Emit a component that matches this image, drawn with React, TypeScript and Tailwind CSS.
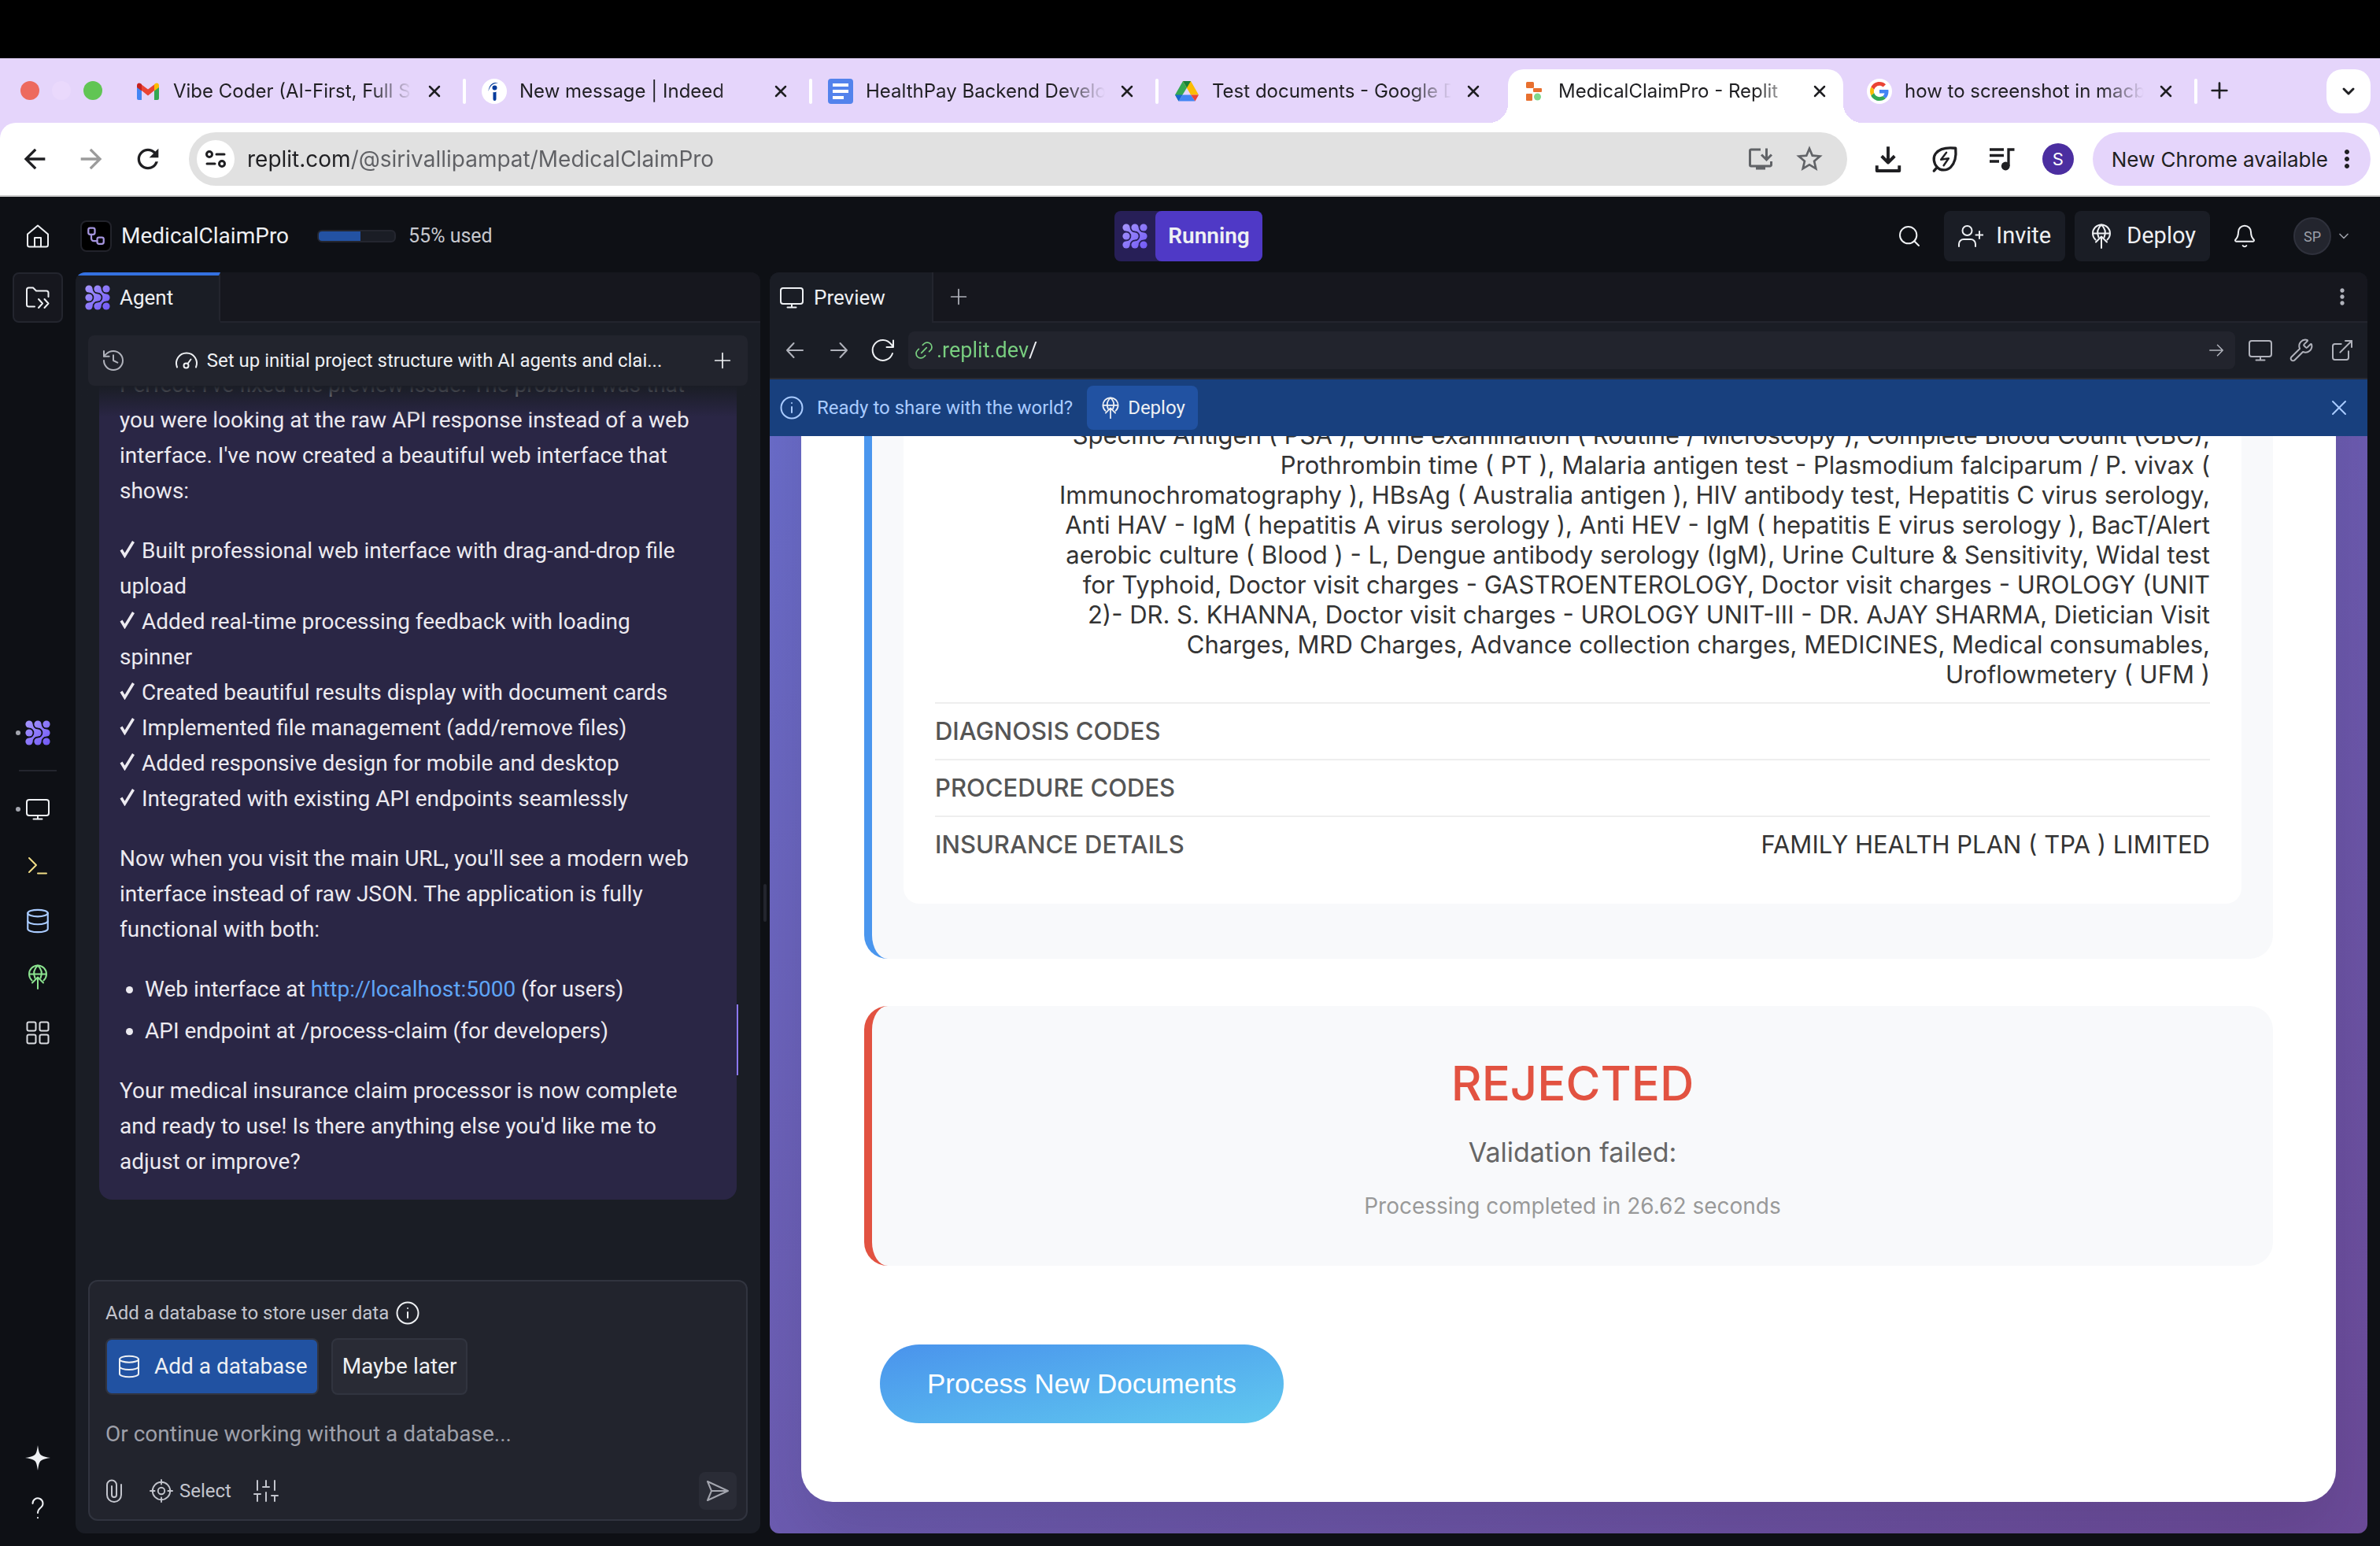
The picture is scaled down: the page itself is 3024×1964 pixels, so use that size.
import React from "react";
import {
  Plus,
  X,
  ChevronDown,
  Bell,
  Search,
  Database,
  History,
  ExternalLink,
  Wrench,
  Link2,
} from "lucide-react";
import {
  MdArrowBack,
  MdArrowForward,
  MdRefresh,
  MdInstallDesktop,
  MdOutlineStarBorder,
  MdMoreVert,
} from "react-icons/md";

type IconProps = { className?: string; children?: React.ReactNode };

function Icon({ className = "size-8", children }: IconProps) {
  return (
    <svg
      viewBox="0 0 32 32"
      fill="none"
      stroke="currentColor"
      strokeWidth={2}
      strokeLinecap="round"
      strokeLinejoin="round"
      aria-hidden="true"
      className={`shrink-0 ${className}`}
    >
      {children}
    </svg>
  );
}

function AgentLogo({ className = "size-8" }: IconProps) {
  return (
    <svg viewBox="0 0 32 32" aria-hidden="true" className={`shrink-0 ${className}`}>
      <defs>
        <linearGradient id="agent" x1="0" y1="0" x2="32" y2="32" gradientUnits="userSpaceOnUse">
          <stop stopColor="#a898ff" />
          <stop offset="1" stopColor="#6f57f5" />
        </linearGradient>
      </defs>
      <g fill="url(#agent)">
        {[5, 16, 27].map((y) => [5, 16, 27].map((x) => <circle key={`${x}-${y}`} cx={x} cy={y} r="4.6" />))}
        <path d="M9.6 5A6.400 6.400 0 0 0 16 11.400L11.400 16A6.400 6.400 0 0 0 5 9.600Z" />
        <path d="M9.6 27A6.400 6.400 0 0 1 16 20.600L11.400 16A6.400 6.400 0 0 1 5 22.400Z" />
        <path d="M20.600 5A6.400 6.400 0 0 0 27 11.400L22.400 16A6.400 6.400 0 0 0 16 9.600Z" />
        <path d="M20.600 27A6.400 6.400 0 0 1 27 20.600L22.400 16A6.400 6.400 0 0 1 16 22.400Z" />
      </g>
    </svg>
  );
}

const MonitorIcon = ({ className }: IconProps) => (
  <Icon className={className}>
    <rect x="2" y="4" width="28" height="20" rx="3" />
    <path d="M16 24v4.500M10.500 28.500h11" />
  </Icon>
);

const DeployIcon = ({ className }: IconProps) => (
  <Icon className={className}>
    <path d="M8.500 20.500A11 11 0 1 1 23.500 20.500M5 12.500h22M16 31V16.500M9 23.500l7-7 7 7" />
    <path d="M12.500 17.500c-2.500-6-1-12 3.500-16 4.500 4 6 10 3.500 16" />
  </Icon>
);

const InfoIcon = ({ className }: IconProps) => (
  <Icon className={className}>
    <circle cx="16" cy="16" r="13.500" />
    <path d="M16 15v7M16 10v.1" />
  </Icon>
);

const InviteIcon = () => (
  <Icon>
    <circle cx="11.500" cy="9" r="6" />
    <path d="M1 29v-3a6 6 0 0 1 6-6h9a6 6 0 0 1 6 6v3M27 10v9M22.500 14.500h9" />
  </Icon>
);

const GmailIcon = () => (
  <svg viewBox="0 0 32 24" className="w-8 shrink-0" aria-hidden="true">
    <path d="M2 5v16a2 2 0 0 0 2 2h4V10z" fill="#4285f4" />
    <path d="M30 5v16a2 2 0 0 1-2 2h-4V10z" fill="#34a853" />
    <path d="M8 3.500l8 6 8-6V11l-8 6.500L8 11z" fill="#ea4335" />
    <path d="M24 3l1.500-1C27.500.7 30 2 30 4.500V7l-6 4.500z" fill="#fbbc04" />
    <path d="M8 3L6.500 2C4.500.7 2 2 2 4.500V7l6 4.500z" fill="#c5221f" />
  </svg>
);

const IndeedIcon = () => (
  <svg viewBox="0 0 32 32" className="size-8 shrink-0" aria-hidden="true">
    <circle cx="16" cy="16" r="16" fill="#fff" />
    <circle cx="16.500" cy="11.500" r="3" fill="#003a9b" />
    <path d="M14.500 17c1.500.4 3 .2 4-.4V26a2 2 0 0 1-4 0z" fill="#003a9b" />
    <path d="M8.500 16C9 9 14 2.500 21.500 6c-5.500-1.500-10.500 2-13 10z" fill="#003a9b" />
  </svg>
);

const DocsIcon = () => (
  <svg viewBox="0 0 32 32" className="size-8 shrink-0" aria-hidden="true">
    <rect width="32" height="32" rx="4" fill="#5383ec" />
    <path d="M6 6h20v4H6zM6 14h20v4H6zM6 22h14v4H6z" fill="#fff" />
  </svg>
);

const DriveIcon = () => (
  <svg viewBox="0 0 32 32" className="size-8 shrink-0" aria-hidden="true">
    <path d="M11 3L1 20.500l4.500 8L16 11.500z" fill="#34a853" />
    <path d="M11 3h10l10 17.500H21z" fill="#fbbc04" />
    <path d="M11 3h10l-5 8.500z" fill="#188038" />
    <path d="M1 20.500h9.500L5.500 28.500z" fill="#1967d2" />
    <path d="M10.500 20.500H21l5.500 8h-21z" fill="#4285f4" />
    <path d="M21 20.500h10l-4.500 8z" fill="#ea4335" />
  </svg>
);

const ReplitIcon = () => (
  <svg viewBox="0 0 32 32" className="size-8 shrink-0" aria-hidden="true">
    <rect x="7" y="4" width="10" height="8" rx="1.500" fill="#e8702f" />
    <rect x="16" y="12" width="11" height="5" rx="1" fill="#e8702f" />
    <rect x="7" y="19" width="8" height="9" rx="1" fill="#e8702f" />
    <circle cx="21.500" cy="23" r="4.500" fill="#7fd88b" />
  </svg>
);

const GoogleIcon = () => (
  <svg viewBox="0 0 32 32" className="size-8 shrink-0" aria-hidden="true">
    <circle cx="16" cy="16" r="16" fill="#fff" />
    <g transform="translate(4 4) scale(0.5)">
      <path fill="#EA4335" d="M24 9.500c3.540 0 6.710 1.220 9.210 3.600l6.850-6.850C35.900 2.380 30.470 0 24 0 14.620 0 6.510 5.380 2.560 13.220l7.980 6.190C12.430 13.720 17.740 9.500 24 9.500z" />
      <path fill="#4285F4" d="M46.980 24.550c0-1.570-.15-3.090-.38-4.550H24v9.020h12.940c-.58 2.960-2.260 5.480-4.780 7.180l7.730 6c4.510-4.180 7.090-10.360 7.090-17.650z" />
      <path fill="#FBBC05" d="M10.530 28.590c-.48-1.450-.76-2.990-.76-4.590s.27-3.140.76-4.590l-7.980-6.190C.92 16.460 0 20.120 0 24c0 3.880.92 7.540 2.560 10.780l7.970-6.190z" />
      <path fill="#34A853" d="M24 48c6.480 0 11.930-2.130 15.890-5.810l-7.730-6c-2.150 1.450-4.920 2.300-8.160 2.300-6.260 0-11.570-4.220-13.470-9.910l-7.980 6.190C6.510 42.620 14.620 48 24 48z" />
    </g>
  </svg>
);

const tabs = [
  { title: "Vibe Coder (AI-First, Full S", icon: <GmailIcon />, active: false, line: true },
  { title: "New message | Indeed", icon: <IndeedIcon />, active: false, line: true },
  { title: "HealthPay Backend Develo", icon: <DocsIcon />, active: false, line: true },
  { title: "Test documents - Google D", icon: <DriveIcon />, active: false, line: false },
  { title: "MedicalClaimPro - Replit", icon: <ReplitIcon />, active: true, line: false },
  { title: "how to screenshot in macb", icon: <GoogleIcon />, active: false, line: true },
];

function TabStrip() {
  return (
    <div className="flex h-[82px] shrink-0 items-start bg-[#e5d5fb] pl-[26px] pr-3 pt-3.5 text-[#1f1f22]">
      <div className="flex h-[54px] w-[126px] shrink-0 items-center gap-4">
        <span className="size-6 rounded-full bg-[#ed6a5e]" />
        <span className="size-6 rounded-full bg-[#ead9fc]" />
        <span className="size-6 rounded-full bg-[#61c554]" />
      </div>
      {tabs.map((tab) => (
        <div key={tab.title} className="relative h-[68px] w-[440px]">
          {tab.active && (
            <>
              <div className="absolute inset-y-0 left-1 right-2.5 rounded-t-[20px] bg-white" />
              <div className="absolute -left-5 bottom-0 size-6 bg-[radial-gradient(circle_at_0_0,transparent_24px,white_24px)]" />
              <div className="absolute -right-3.5 bottom-0 size-6 bg-[radial-gradient(circle_at_100%_0,transparent_24px,white_24px)]" />
            </>
          )}
          <div className="relative flex h-14 items-center pl-5">
            {tab.icon}
            <a
              href="#"
              className="ml-4 w-[304px] whitespace-nowrap text-[24px] leading-8 [mask-image:linear-gradient(to_right,black_250px,transparent_304px)]"
            >
              {tab.title}
            </a>
            <button aria-label={`Close ${tab.title}`} className="ml-4 flex size-6 items-center justify-center">
              <X className="size-6" strokeWidth={2.5} />
            </button>
            <span className={tab.line ? "ml-6 h-8 w-1 rounded bg-white" : "hidden"} />
          </div>
        </div>
      ))}
      <button aria-label="New tab" className="ml-3 flex h-[54px] w-8 items-center justify-center">
        <Plus className="size-8" strokeWidth={2} />
      </button>
      <button
        aria-label="Search tabs"
        className="ml-auto flex size-14 items-center justify-center rounded-[20px] bg-white"
      >
        <ChevronDown className="size-6" strokeWidth={3} />
      </button>
    </div>
  );
}

function BrowserBar() {
  return (
    <div className="shrink-0 bg-[#e5d5fb]">
      <div className="flex h-[94px] items-center rounded-t-[20px] border-b-2 border-[#c9c9c9] bg-white pl-6 pr-3 text-[#1f1f22]">
        <button aria-label="Back" className="w-[72px]">
          <MdArrowBack className="size-10" />
        </button>
        <button aria-label="Forward" className="w-[72px] text-[#9b9b9b]">
          <MdArrowForward className="size-10" />
        </button>
        <button aria-label="Reload" className="w-[72px]">
          <MdRefresh className="size-10" />
        </button>
        <div className="flex h-[68px] flex-1 items-center rounded-full bg-[#e1e1e1] pl-2.5 pr-7">
          <button aria-label="Site information" className="flex size-12 items-center justify-center rounded-full bg-white">
            <Icon className="size-8">
              <g strokeWidth={3}>
                <circle cx="8" cy="10" r="3.500" />
                <path d="M17 10h10M5 22h10" />
                <circle cx="24" cy="22" r="3.500" />
              </g>
            </Icon>
          </button>
          <input
            aria-label="Address"
            defaultValue="replit.com/@sirivallipampat/MedicalClaimPro"
            className="ml-4 min-w-0 flex-1 bg-[linear-gradient(90deg,#1f1f22_132px,#5f6064_132px)] bg-clip-text text-[28px] leading-9 text-transparent outline-none"
          />
          <button aria-label="Install app" className="mr-6 text-[#616367]">
            <MdInstallDesktop className="size-9" />
          </button>
          <button aria-label="Bookmark" className="text-[#616367]">
            <MdOutlineStarBorder className="size-10" />
          </button>
        </div>
        <button aria-label="Downloads" className="ml-7">
          <Icon className="size-12">
            <path d="M16 5.500v12M10.500 13.500l5.500 5.500 5.500-5.500M6.500 21.500v4.500h19v-4.500" strokeWidth={2.600} strokeLinecap="butt" />
          </Icon>
        </button>
        <button aria-label="Energy saver" className="ml-[26px]">
          <Icon className="size-11">
            <path
              d="M26 6c-4-.5-9-.5-13 1C8 9 5.500 13 6 17c.3 3 1.500 5 3 6.500 3 3.500 9 3.500 12.500 0C26.500 18.500 26.500 11 26 6zM9 23.500L6 27"
              strokeWidth={2.400}
            />
            <path d="M17.500 10l-5 6.500 7-1-4.500 6.500" strokeWidth={1.800} />
          </Icon>
        </button>
        <button aria-label="Media" className="ml-[26px]">
          <Icon className="size-12">
            <path d="M6 8h12M6 13h12M6 18h8" strokeWidth={2.200} strokeLinecap="butt" />
            <path d="M22 22V8h5" strokeWidth={2.200} strokeLinecap="butt" strokeLinejoin="miter" />
            <circle cx="19.500" cy="22" r="3.600" fill="currentColor" stroke="none" />
          </Icon>
        </button>
        <button
          aria-label="Profile"
          className="ml-7 flex size-10 items-center justify-center rounded-full bg-[#4b2ea0] text-[22px] text-white"
        >
          S
        </button>
        <button className="ml-6 flex h-[68px] items-center rounded-full bg-[#e5d5fb] pl-6 pr-3 text-[26px]">
          New Chrome available
          <MdMoreVert className="ml-1.5 size-9" />
        </button>
      </div>
    </div>
  );
}

function Header() {
  return (
    <header className="grid h-24 shrink-0 grid-cols-[1fr_auto_1fr] items-center pl-8 pr-9 pt-1 text-[28px]">
      <div className="flex items-center">
        <button aria-label="Home">
          <Icon>
            <path d="M3 13.500L16 2.500l13 11V27a2.500 2.500 0 0 1-2.500 2.500h-21A2.500 2.500 0 0 1 3 27zM12 29.500V18h8v11.500" />
          </Icon>
        </button>
        <span className="ml-[38px] flex size-10 items-center justify-center rounded-lg border-2 border-[#22232b] bg-black text-[#a595dd]">
          <Icon className="size-6">
            <rect x="3" y="2" width="11" height="11" rx="3" strokeWidth={3} />
            <rect x="18" y="18" width="11" height="11" rx="3" strokeWidth={3} />
            <path d="M8 13v7a4 4 0 0 0 4 4h6" strokeWidth={3} />
          </Icon>
        </span>
        <span className="ml-3">MedicalClaimPro</span>
        <span className="ml-9 flex h-4 w-[100px] overflow-hidden rounded-md border-2 border-[#24262f] bg-[#1a1d25]">
          <span className="w-[55%] bg-[#2352a3]" />
        </span>
        <span className="ml-4 text-[25px] text-[#c6c8ce]">55% used</span>
      </div>
      <button className="flex h-16 items-center rounded-lg bg-[#271f57] font-semibold">
        <span className="flex w-[52px] justify-center">
          <AgentLogo />
        </span>
        <span className="flex h-16 items-center rounded-lg bg-[#4f39c6] px-4">Running</span>
      </button>
      <div className="flex items-center justify-end">
        <button aria-label="Search" className="mr-7">
          <Search className="size-8" strokeWidth={1.5} />
        </button>
        <button className="mr-3 flex h-16 items-center gap-4 rounded-lg bg-[#1a1d25] px-[18px] text-[29px]">
          <InviteIcon />
          Invite
        </button>
        <button className="flex h-16 items-center gap-4 rounded-lg bg-[#1a1d25] px-[18px] text-[29px]">
          <DeployIcon />
          Deploy
        </button>
        <button aria-label="Notifications" className="ml-7">
          <Bell className="size-8" strokeWidth={1.5} />
        </button>
        <button aria-label="Account" className="ml-[46px] flex items-center gap-1.5">
          <span className="flex size-12 items-center justify-center rounded-full border-2 border-[#2f313c] bg-[#23252e] text-[18px] text-[#9c9fa8]">
            SP
          </span>
          <ChevronDown className="size-5 text-[#9c9fa8]" strokeWidth={2} />
        </button>
      </div>
    </header>
  );
}

function RailButton({ label, color, dot, children }: { label: string; color: string; dot?: boolean; children: React.ReactNode }) {
  return (
    <button aria-label={label} className={`relative flex h-[71px] w-full items-center justify-center ${color}`}>
      {dot && <span className="absolute left-5 size-1.5 rounded-full bg-[#a3a5ae]" />}
      {children}
    </button>
  );
}

function Rail() {
  return (
    <nav className="flex w-24 shrink-0 flex-col items-center">
      <button
        aria-label="Show files"
        className="flex size-16 items-center justify-center rounded-lg border-2 border-[#23252e] bg-[#16171e]"
      >
        <Icon>
          <path d="M12 27.500H4.500A2.500 2.500 0 0 1 2 25V6a2.500 2.500 0 0 1 2.500-2.500H10l4 4h13A2.500 2.500 0 0 1 29.500 10v5M17 18l5 5.500-5 5.500M24.500 18l5 5.500-5 5.500" />
        </Icon>
      </button>
      <div className="my-auto flex w-full flex-col items-center pt-3">
        <RailButton label="Agent" color="" dot>
          <AgentLogo />
        </RailButton>
        <hr className="my-3 h-0.5 w-12 border-0 bg-[#23252e]" />
        <RailButton label="Preview" color="text-[#eef0f3]" dot>
          <MonitorIcon />
        </RailButton>
        <RailButton label="Shell" color="text-[#f2dd86]">
          <Icon>
            <path d="M5 7l9 9-9 9M16 26.500h11" />
          </Icon>
        </RailButton>
        <RailButton label="Database" color="text-[#a9cbff]">
          <Database className="size-[34px]" strokeWidth={1.5} />
        </RailButton>
        <RailButton label="Deployments" color="text-[#8be38f]">
          <DeployIcon />
        </RailButton>
        <RailButton label="All tools" color="text-[#d9dbe0]">
          <Icon>
            <rect x="2.500" y="2.500" width="11" height="11" rx="2" />
            <rect x="18.500" y="2.500" width="11" height="11" rx="2" />
            <rect x="2.500" y="18.500" width="11" height="11" rx="2" />
            <rect x="18.500" y="18.500" width="11" height="11" rx="2" />
          </Icon>
        </RailButton>
      </div>
      <button aria-label="Assistant" className="flex h-16 items-center">
        <Icon>
          <path
            d="M16 0c1.200 8 2 11.500 5 13 2.500 1.400 6 2.200 11 3-5 .8-8.500 1.600-11 3-3 1.500-3.800 5-5 13-1.200-8-2-11.500-5-13-2.500-1.400-6-2.200-11-3 5-.8 8.500-1.600 11-3 3-1.500 3.800-5 5-13z"
            fill="currentColor"
            stroke="none"
          />
        </Icon>
      </button>
      <button aria-label="Help" className="flex h-16 items-center">
        <Icon>
          <path d="M9.500 10a6.500 6.500 0 1 1 10.500 5c-2.500 2-4 3-4 7M16 28v.2" />
        </Icon>
      </button>
    </nav>
  );
}

const features = [
  ["Built professional web interface with drag-and-drop file", "upload"],
  ["Added real-time processing feedback with loading", "spinner"],
  ["Created beautiful results display with document cards"],
  ["Implemented file management (add/remove files)"],
  ["Added responsive design for mobile and desktop"],
  ["Integrated with existing API endpoints seamlessly"],
];

function Lines({ lines }: { lines: string[] }) {
  return (
    <>
      {lines.map((line, i) => (
        <React.Fragment key={line}>
          {i > 0 && <br />}
          {line}
        </React.Fragment>
      ))}
    </>
  );
}

function Message() {
  return (
    <div className="shrink-0 space-y-[31px] whitespace-nowrap rounded-2xl bg-[#2a2645] px-[26px] pb-[26px] text-[28px] leading-[45px] text-[#eceaf0]">
      <p>
        <Lines
          lines={[
            "Perfect! I've fixed the preview issue. The problem was that",
            "you were looking at the raw API response instead of a web",
            "interface. I've now created a beautiful web interface that",
            "shows:",
          ]}
        />
      </p>
      <div>
        {features.map((lines) => (
          <p key={lines[0]}>
            <svg viewBox="0 0 20 24" className="mr-2 inline-block h-6 w-5 align-baseline" aria-label="Done">
              <path d="M2 13.500l4.500 7.500L17.500 3" fill="none" stroke="currentColor" strokeWidth="3.500" />
            </svg>
            <Lines lines={lines} />
          </p>
        ))}
      </div>
      <p>
        <Lines
          lines={[
            "Now when you visit the main URL, you'll see a modern web",
            "interface instead of raw JSON. The application is fully",
            "functional with both:",
          ]}
        />
      </p>
      <ul className="list-disc space-y-2 pl-8">
        <li>
          Web interface at{" "}
          <a href="http://localhost:5000" className="text-[#5fa5f7]">
            http://localhost:5000
          </a>{" "}
          (for users)
        </li>
        <li>API endpoint at /process-claim (for developers)</li>
      </ul>
      <p>
        <Lines
          lines={[
            "Your medical insurance claim processor is now complete",
            "and ready to use! Is there anything else you'd like me to",
            "adjust or improve?",
          ]}
        />
      </p>
    </div>
  );
}

function Composer() {
  return (
    <form className="mx-4 mb-4 shrink-0 rounded-xl border-2 border-[#31343f] bg-[#22242d] px-5 pb-3 pt-4">
      <div className="flex h-12 items-center gap-2 text-[24px] text-[#c3c5cd]">
        Add a database to store user data
        <InfoIcon className="size-8 text-[#eef0f3]" />
      </div>
      <div className="mt-2 flex gap-4 text-[28px]">
        <button type="button" className="flex h-[72px] items-center gap-4 rounded-lg border-2 border-[#31343f] bg-[#2152a2] px-3">
          <Database className="size-8" strokeWidth={1.5} />
          Add a database
        </button>
        <button type="button" className="h-[72px] rounded-lg border-2 border-[#31343f] bg-[#292b35] px-3">
          Maybe later
        </button>
      </div>
      <textarea
        aria-label="Message"
        rows={1}
        placeholder="Or continue working without a database..."
        className="mt-7 block h-11 w-full resize-none overflow-hidden bg-transparent text-[28px] leading-[44px] outline-none placeholder:text-[#9ea0aa]"
      />
      <div className="mt-[26px] flex h-12 items-center text-[24px] text-[#c3c5cd]">
        <button type="button" aria-label="Attach" className="-ml-1">
          <Icon>
            <path d="M6 8v13a9 9 0 0 0 18 0V8M6 8.500a6 6 0 0 1 12 0v12.500a3 3 0 0 1-6 0V10" />
          </Icon>
        </button>
        <button type="button" className="ml-7 flex items-center gap-2">
          <Icon className="size-[30px]">
            <circle cx="16" cy="16" r="12" />
            <circle cx="16" cy="16" r="4.500" />
            <path d="M16 1v6M16 25v6M1 16h6M25 16h6" />
          </Icon>
          Select
        </button>
        <button type="button" aria-label="Options" className="ml-7">
          <Icon>
            <path d="M5 3v12M16 3v8M27 3v12M16 18v11M5 20v9M27 22v7M1 20h8M12 11h8M23 22h8" />
          </Icon>
        </button>
        <button
          type="submit"
          aria-label="Send"
          className="-mr-2 ml-auto flex size-12 items-center justify-center rounded-lg bg-[#2a2c36] text-[#a3a5ae]"
        >
          <Icon>
            <path d="M3 4l26 12L3 28l5-12zM8 16h20" />
          </Icon>
        </button>
      </div>
    </form>
  );
}

function AgentPanel() {
  return (
    <section className="flex w-[870px] shrink-0 flex-col overflow-hidden rounded-xl bg-[#1a1d25]">
      <div className="flex h-16 shrink-0 bg-[#16171e]">
        <button className="flex w-[184px] items-center gap-3 border-b-4 border-r-2 border-t-4 border-b-transparent border-r-[#23252e] border-t-[#3471e0] bg-[#1a1d25] pl-3 text-[26px]">
          <AgentLogo />
          Agent
        </button>
        <div className="flex-1 border-b-2 border-[#23252e]" />
      </div>
      <div className="mx-4 mt-4 flex h-16 shrink-0 items-center rounded-lg bg-[#22242d] px-4 text-[24px]">
        <button aria-label="History">
          <History className="size-8 text-[#b0b2bb]" strokeWidth={1.5} />
        </button>
        <div className="flex flex-1 items-center justify-center gap-2.5 whitespace-nowrap">
          <Icon>
            <path d="M4 24.500a13 13 0 1 1 24 0" />
            <circle cx="15.500" cy="22.500" r="3" />
            <path d="M17.500 20l4-5.500" />
          </Icon>
          Set up initial project structure with AI agents and clai...
        </div>
        <button aria-label="New chat">
          <Plus className="size-8" strokeWidth={1.3} />
        </button>
      </div>
      <div className="relative flex min-h-0 flex-1 flex-col justify-end overflow-hidden px-[30px] pb-[102px]">
        <Message />
        <div className="absolute inset-x-0 top-0 h-10 bg-gradient-to-b from-[#1a1d25] to-transparent" />
        <div className="absolute bottom-[260px] right-7 h-[90px] w-0.5 bg-[#8b78f6]" />
      </div>
      <Composer />
    </section>
  );
}

const treatments = [
  "Specific Antigen ( PSA ), Urine examination ( Routine / Microscopy ), Complete Blood Count (CBC),",
  "Prothrombin time ( PT ), Malaria antigen test - Plasmodium falciparum / P. vivax (",
  "Immunochromatography ), HBsAg ( Australia antigen ), HIV antibody test, Hepatitis C virus serology,",
  "Anti HAV - IgM ( hepatitis A virus serology ), Anti HEV - IgM ( hepatitis E virus serology ), BacT/Alert",
  "aerobic culture ( Blood ) - L, Dengue antibody serology (IgM), Urine Culture & Sensitivity, Widal test",
  "for Typhoid, Doctor visit charges - GASTROENTEROLOGY, Doctor visit charges - UROLOGY (UNIT",
  "2)- DR. S. KHANNA, Doctor visit charges - UROLOGY UNIT-III - DR. AJAY SHARMA, Dietician Visit",
  "Charges, MRD Charges, Advance collection charges, MEDICINES, Medical consumables,",
  "Uroflowmetery ( UFM )",
];

function DetailRow({ label, children }: { label: string; children?: React.ReactNode }) {
  return (
    <div className="flex justify-between border-b-2 border-[#eeeeee] py-4 last:border-b-0">
      <dt className="font-medium text-[#555555]">{label}</dt>
      <dd className="text-right">{children}</dd>
    </div>
  );
}

function ClaimPage() {
  return (
    <div className="flex min-h-0 flex-1 flex-col justify-end overflow-hidden bg-gradient-to-br from-[#6a6cc9] to-[#6b4a98] px-10 pb-10 font-['Inter',sans-serif] text-[31px] leading-[38px] text-[#333333]">
      <div className="shrink-0 rounded-b-[40px] bg-white p-20 shadow-[0_40px_80px_rgba(0,0,0,0.1)]">
        <div className="rounded-[30px] border-l-[10px] border-[#4a96ee] bg-[#f8f9fb] px-10 pb-[70px] pt-10">
          <dl className="rounded-[20px] bg-white p-10">
            <DetailRow label="">
              <span className="whitespace-nowrap">
                <Lines lines={treatments} />
              </span>
            </DetailRow>
            <DetailRow label="DIAGNOSIS CODES" />
            <DetailRow label="PROCEDURE CODES" />
            <DetailRow label="INSURANCE DETAILS">FAMILY HEALTH PLAN ( TPA ) LIMITED</DetailRow>
          </dl>
        </div>
        <div className="mt-[60px] rounded-[30px] border-l-[10px] border-[#e25241] bg-[#f8f9fb] pb-[58px] pt-[60px] text-center">
          <h2 className="text-[60px] font-medium leading-[76px] text-[#e25241]">REJECTED</h2>
          <p className="mt-7 text-[34px] leading-[44px] text-[#666666]">Validation failed:</p>
          <p className="mt-7 text-[28px] leading-9 text-[#999999]">Processing completed in 26.62 seconds</p>
        </div>
        <button className="mx-5 mb-5 mt-[100px] block h-[100px] rounded-full bg-gradient-to-br from-[#4a93ec] to-[#61c8ef] px-[60px] font-['Liberation_Sans',sans-serif] text-[35px] text-white">
          Process New Documents
        </button>
      </div>
    </div>
  );
}

function PreviewPanel() {
  return (
    <section className="flex min-w-0 flex-1 flex-col overflow-hidden rounded-xl bg-[#1a1d25]">
      <div className="flex h-16 shrink-0 bg-[#16171e]">
        <button className="flex w-[208px] items-center gap-3 border-r-2 border-[#23252e] bg-[#1a1d25] pl-3 text-[26px]">
          <MonitorIcon />
          Preview
        </button>
        <div className="flex flex-1 items-center border-b-2 border-[#23252e] pl-4 pr-4 text-[#b0b2bb]">
          <button aria-label="New pane">
            <Plus className="size-8" strokeWidth={1.3} />
          </button>
          <button aria-label="Pane menu" className="ml-auto">
            <MdMoreVert className="size-8" />
          </button>
        </div>
      </div>
      <div className="flex h-[72px] shrink-0 items-center border-b-2 border-[#2a2b33] pl-4 pr-4 text-[#b0b2bb]">
        <button aria-label="Back" className="w-14">
          <Icon>
            <path d="M26 16H6M14.500 7L6 16l8.500 9" />
          </Icon>
        </button>
        <button aria-label="Forward" className="w-14">
          <Icon>
            <path d="M6 16h20M17.500 7l8.500 9-8.500 9" />
          </Icon>
        </button>
        <button aria-label="Reload" className="w-12 text-[#eef0f3]">
          <Icon>
            <path d="M28 20A13 13 0 1 1 26 8l2.500 3M29 3.500V12h-8.500" />
          </Icon>
        </button>
        <div className="flex h-12 flex-1 items-center rounded-lg bg-[#22242d] pl-1.5 pr-3">
          <Link2 className="size-7 -rotate-45 text-[#79cf80]" strokeWidth={1.5} />
          <input
            aria-label="Preview address"
            defaultValue=".replit.dev/"
            className="ml-0.5 min-w-0 flex-1 bg-[linear-gradient(90deg,#79cf80_117px,#eef0f3_117px)] bg-clip-text text-[27px] leading-9 text-transparent outline-none"
          />
          <button aria-label="Go">
            <Icon className="size-6">
              <path d="M5 16h22M18 7l9 9-9 9" />
            </Icon>
          </button>
        </div>
        <div className="ml-4 flex items-center gap-5">
          <button aria-label="Devices">
            <MonitorIcon />
          </button>
          <button aria-label="Developer tools">
            <Wrench className="size-8" strokeWidth={1.5} />
          </button>
          <button aria-label="Open in new tab">
            <ExternalLink className="size-8" strokeWidth={1.5} />
          </button>
        </div>
      </div>
      <div className="flex h-[72px] shrink-0 items-center bg-[#18407e] pl-3 pr-5 text-[24px] text-[#a9cbff]">
        <InfoIcon />
        <span className="ml-4">Ready to share with the world?</span>
        <button className="ml-[18px] flex h-14 items-center gap-2 rounded-lg bg-[#2152a2] px-4 text-[#eef0f3]">
          <DeployIcon className="size-7" />
          Deploy
        </button>
        <button aria-label="Dismiss" className="ml-auto">
          <X className="size-8" strokeWidth={1.5} />
        </button>
      </div>
      <ClaimPage />
    </section>
  );
}

export default function App() {
  return (
    <div className="flex h-screen flex-col overflow-hidden bg-black font-['Inter',sans-serif]">
      <div className="h-[74px] shrink-0" />
      <TabStrip />
      <BrowserBar />
      <div className="flex min-h-0 flex-1 flex-col bg-[#0e1015] font-['Roboto',sans-serif] text-[#eef0f3]">
        <Header />
        <main className="flex min-h-0 flex-1 pb-4 pr-4">
          <Rail />
          <AgentPanel />
          <div className="flex w-3 shrink-0 items-center justify-center">
            <span className="h-12 w-1 rounded bg-[#23252e]" />
          </div>
          <div className="flex min-w-0 flex-1">
            <PreviewPanel />
          </div>
        </main>
      </div>
    </div>
  );
}
